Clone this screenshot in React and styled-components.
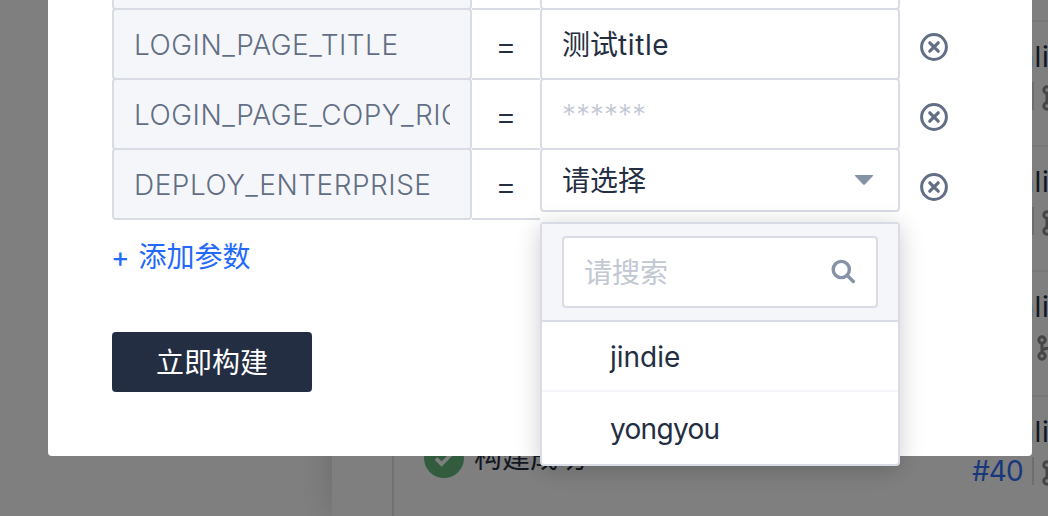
import React from 'react';
import styled, { createGlobalStyle } from 'styled-components';

const Global = createGlobalStyle`
  * { box-sizing: border-box; }
  body {
    margin: 0;
    overflow: hidden;
    background: #fff;
    color: #242e42;
    font: 350 28px/40px Inter, "Noto Sans CJK SC", sans-serif;
  }
`;

const Page = styled.div`
  display: flex;
  width: 1048px;
  height: 516px;
  overflow: hidden;
`;
const Aside = styled.div`
  flex: 0 0 332px;
`;
const Panel = styled.main`
  display: flex;
  flex: 1;
  min-width: 0;
  background: #fff;
  box-shadow: 0 0 32px rgba(0, 0, 0, 0.17);
`;
const Gutter = styled.div`
  flex: 0 0 62px;
  border-right: 2px solid #e3e3e3;
`;
const History = styled.div`
  flex: none;
  width: 720px;
  padding-top: 20px;
  border: 0;
`;
const Build = styled.div`
  display: flex;
  height: 125px;
  padding: 0 0 0 30px;
  border-top: 2px solid #f0f0f0;
`;
const Status = styled.div`
  display: flex;
  align-items: center;
  gap: 10px;
  width: 548px;
  padding-bottom: 1px;
  font-weight: 400;
`;
const Meta = styled.div`
  padding-top: 15px;
  white-space: nowrap;
`;
const Branch = styled.div`
  height: 39px;
  padding-left: 28px;
  font-weight: 370;
  letter-spacing: 0.6px;
`;
const Commit = styled.div`
  display: flex;
  align-items: center;
  gap: 8px;
  height: 40px;
`;
const Number = styled.span`
  width: ${(p) => p.$width}px;
  color: #2f70fb;
  font-weight: 370;
  letter-spacing: -0.9px;
`;
const Bar = styled.i`
  width: 2px;
  height: 28px;
  background: #dcdcdc;
`;

const Mask = styled.div`
  position: fixed;
  inset: 0;
  display: flex;
  align-items: flex-end;
  padding: 0 16px 60px 48px;
  background: rgba(0, 0, 0, 0.5);
`;
const Dialog = styled.section`
  width: 984px;
  padding: 0 64px 64px;
  border-radius: 4px;
  background: #fff;
`;
const Param = styled.div`
  display: flex;
  height: 72px;
  margin-bottom: -2px;
`;
const Field = styled.div`
  width: 360px;
  height: ${(p) => p.$height || 72}px;
  padding: ${(p) => p.$top || 15}px 20px 0;
  border: 2px solid #d9dce4;
  border-radius: 4px;
  background: ${(p) => (p.$name ? '#f5f6fa' : '#fff')};
  color: ${(p) => (p.$name ? '#626e84' : p.$faint ? '#c1c7d3' : '#242e42')};
`;
const Clip = styled.span`
  display: block;
  overflow: hidden;
  white-space: nowrap;
  font-weight: ${(p) => p.$weight || 350};
  letter-spacing: ${(p) => p.$track || 0}px;
`;
const Han = styled.span`
  font-weight: 400;
  letter-spacing: 0;
`;
const Equals = styled.div`
  width: 68px;
  padding-top: 23px;
  border: solid #d9dce4;
  border-width: 2px 0;
  font: 400 28px/32px "Liberation Sans", sans-serif;
  text-align: center;
`;
const Remove = styled.button`
  width: 28px;
  height: 28px;
  margin: 25px 0 0 20px;
  padding: 0;
  border: 0;
  background: none;
  svg { display: block; }
`;
const SelectWrap = styled.div`
  position: relative;
`;
const SelectRow = styled.div`
  display: flex;
  align-items: center;
  justify-content: space-between;
  padding-right: 4px;
  font-weight: 400;
  svg { margin-top: -2px; }
`;
const Menu = styled.div`
  position: absolute;
  top: 74px;
  left: 0;
  width: 360px;
  height: 244px;
  border: 2px solid #d9dce4;
  border-radius: 4px;
  background: #fff;
  box-shadow: 0 4px 24px rgba(0, 0, 0, 0.2);
`;
const MenuHead = styled.div`
  height: 98px;
  padding: 12px 20px 0;
  border-bottom: 2px solid #d9dce4;
  background: #f5f6fa;
`;
const Search = styled.div`
  display: flex;
  align-items: center;
  justify-content: space-between;
  height: 72px;
  padding: 2px 20px 0;
  border: 2px solid #d9dce4;
  border-radius: 4px;
  background: #fff;
  color: #c1c7d3;
  font-weight: 400;
  svg { margin-top: -2px; }
`;
const Option = styled.div`
  height: 70px;
  padding: 15px 0 0 68px;
  font-weight: 370;
  letter-spacing: ${(p) => p.$track || 0}px;
  & + & { height: 74px; border-top: 2px solid #f5f6fa; margin-top: -2px; padding-top: 17px; }
`;
const Add = styled.a`
  display: block;
  width: fit-content;
  margin: 19px 0 0 -1px;
  color: #2369fb;
  font-weight: 400;
  word-spacing: 1px;
`;
const Submit = styled.button`
  display: block;
  width: 200px;
  height: 60px;
  margin-top: 55px;
  padding: 2px 0 0;
  border: 0;
  border-radius: 4px;
  background: #242e42;
  color: #fff;
  font: inherit;
  font-weight: 400;
`;

const Close = () => (
  <svg width="28" height="28" viewBox="0 0 28 28" fill="none" stroke="#626e84">
    <circle cx="14" cy="14" r="12.4" strokeWidth="3" />
    <path d="M9.8 9.8l8.4 8.4M18.2 9.8l-8.4 8.4" strokeWidth="3.2" strokeLinecap="round" />
  </svg>
);
const Caret = () => (
  <svg width="20" height="12" viewBox="0 0 20 12">
    <path d="M1.6 1h16.8q1.4 0 .5 1l-8 8.4q-.9.8-1.8 0l-8-8.4q-.9-1 .5-1z" fill="#8692a6" />
  </svg>
);
const Magnifier = () => (
  <svg width="26" height="26" viewBox="0 0 26 26" fill="none" stroke="#8692a6">
    <circle cx="11.3" cy="10.5" r="8.1" strokeWidth="3.4" />
    <path d="M17.3 16.5l6 6" strokeWidth="3.4" strokeLinecap="round" />
  </svg>
);
const Check = () => (
  <svg width="40" height="40" viewBox="0 0 40 40">
    <circle cx="20" cy="20" r="20" fill="#66b97f" />
    <path d="M12 20.5l5.6 5.6L28.5 15" fill="none" stroke="#fff" strokeWidth="3.6" />
  </svg>
);
const Fork = () => (
  <svg width="22" height="30" viewBox="0 0 22 30" fill="none" stroke="#8c8c8c" strokeWidth="3">
    <circle cx="5" cy="9" r="3.2" />
    <circle cx="5" cy="25" r="3.2" />
    <circle cx="17" cy="12" r="3.2" />
    <path d="M5 12v10M5 19.5l3.5-2 5.5-.5q3-.5 3-2" />
  </svg>
);

const builds = [
  { key: 1, width: 52 },
  { key: 2, width: 52 },
  { key: 3, width: 47 },
  { key: 4, width: 52, id: '#40', status: '构建成功' },
];

export default function App() {
  return (
    <>
      <Global />
      <Page>
        <Aside />
        <Panel>
          <Gutter />
          <History>
            {builds.map((b) => (
              <Build key={b.key}>
                <Status>{b.status && <><Check />{b.status}</>}</Status>
                <Meta>
                  <Branch>online</Branch>
                  <Commit><Number $width={b.width}>{b.id}</Number><Bar /><Fork /></Commit>
                </Meta>
              </Build>
            ))}
          </History>
        </Panel>
      </Page>
      <Mask>
        <Dialog>
          <Param>
            <Field $name />
            <Equals />
            <Field />
          </Param>
          <Param>
            <Field $name><Clip $track={0.5}>LOGIN_PAGE_TITLE</Clip></Field>
            <Equals>=</Equals>
            <Field><Clip $weight={370} $track={0.6}><Han>测试</Han>title</Clip></Field>
            <Remove><Close /></Remove>
          </Param>
          <Param>
            <Field $name><Clip $track={0.5}>LOGIN_PAGE_COPY_RIGHT</Clip></Field>
            <Equals>=</Equals>
            <Field $faint><Clip>******</Clip></Field>
            <Remove><Close /></Remove>
          </Param>
          <Param>
            <Field $name><Clip $track={0.5}>DEPLOY_ENTERPRISE</Clip></Field>
            <Equals>=</Equals>
            <SelectWrap>
              <Field $height={64} $top={11}>
                <SelectRow>请选择<Caret /></SelectRow>
              </Field>
              <Menu>
                <MenuHead><Search>请搜索<Magnifier /></Search></MenuHead>
                <Option>jindie</Option>
                <Option $track={-0.7}>yongyou</Option>
              </Menu>
            </SelectWrap>
            <Remove><Close /></Remove>
          </Param>
          <Add>+ 添加参数</Add>
          <Submit>立即构建</Submit>
        </Dialog>
      </Mask>
    </>
  );
}
